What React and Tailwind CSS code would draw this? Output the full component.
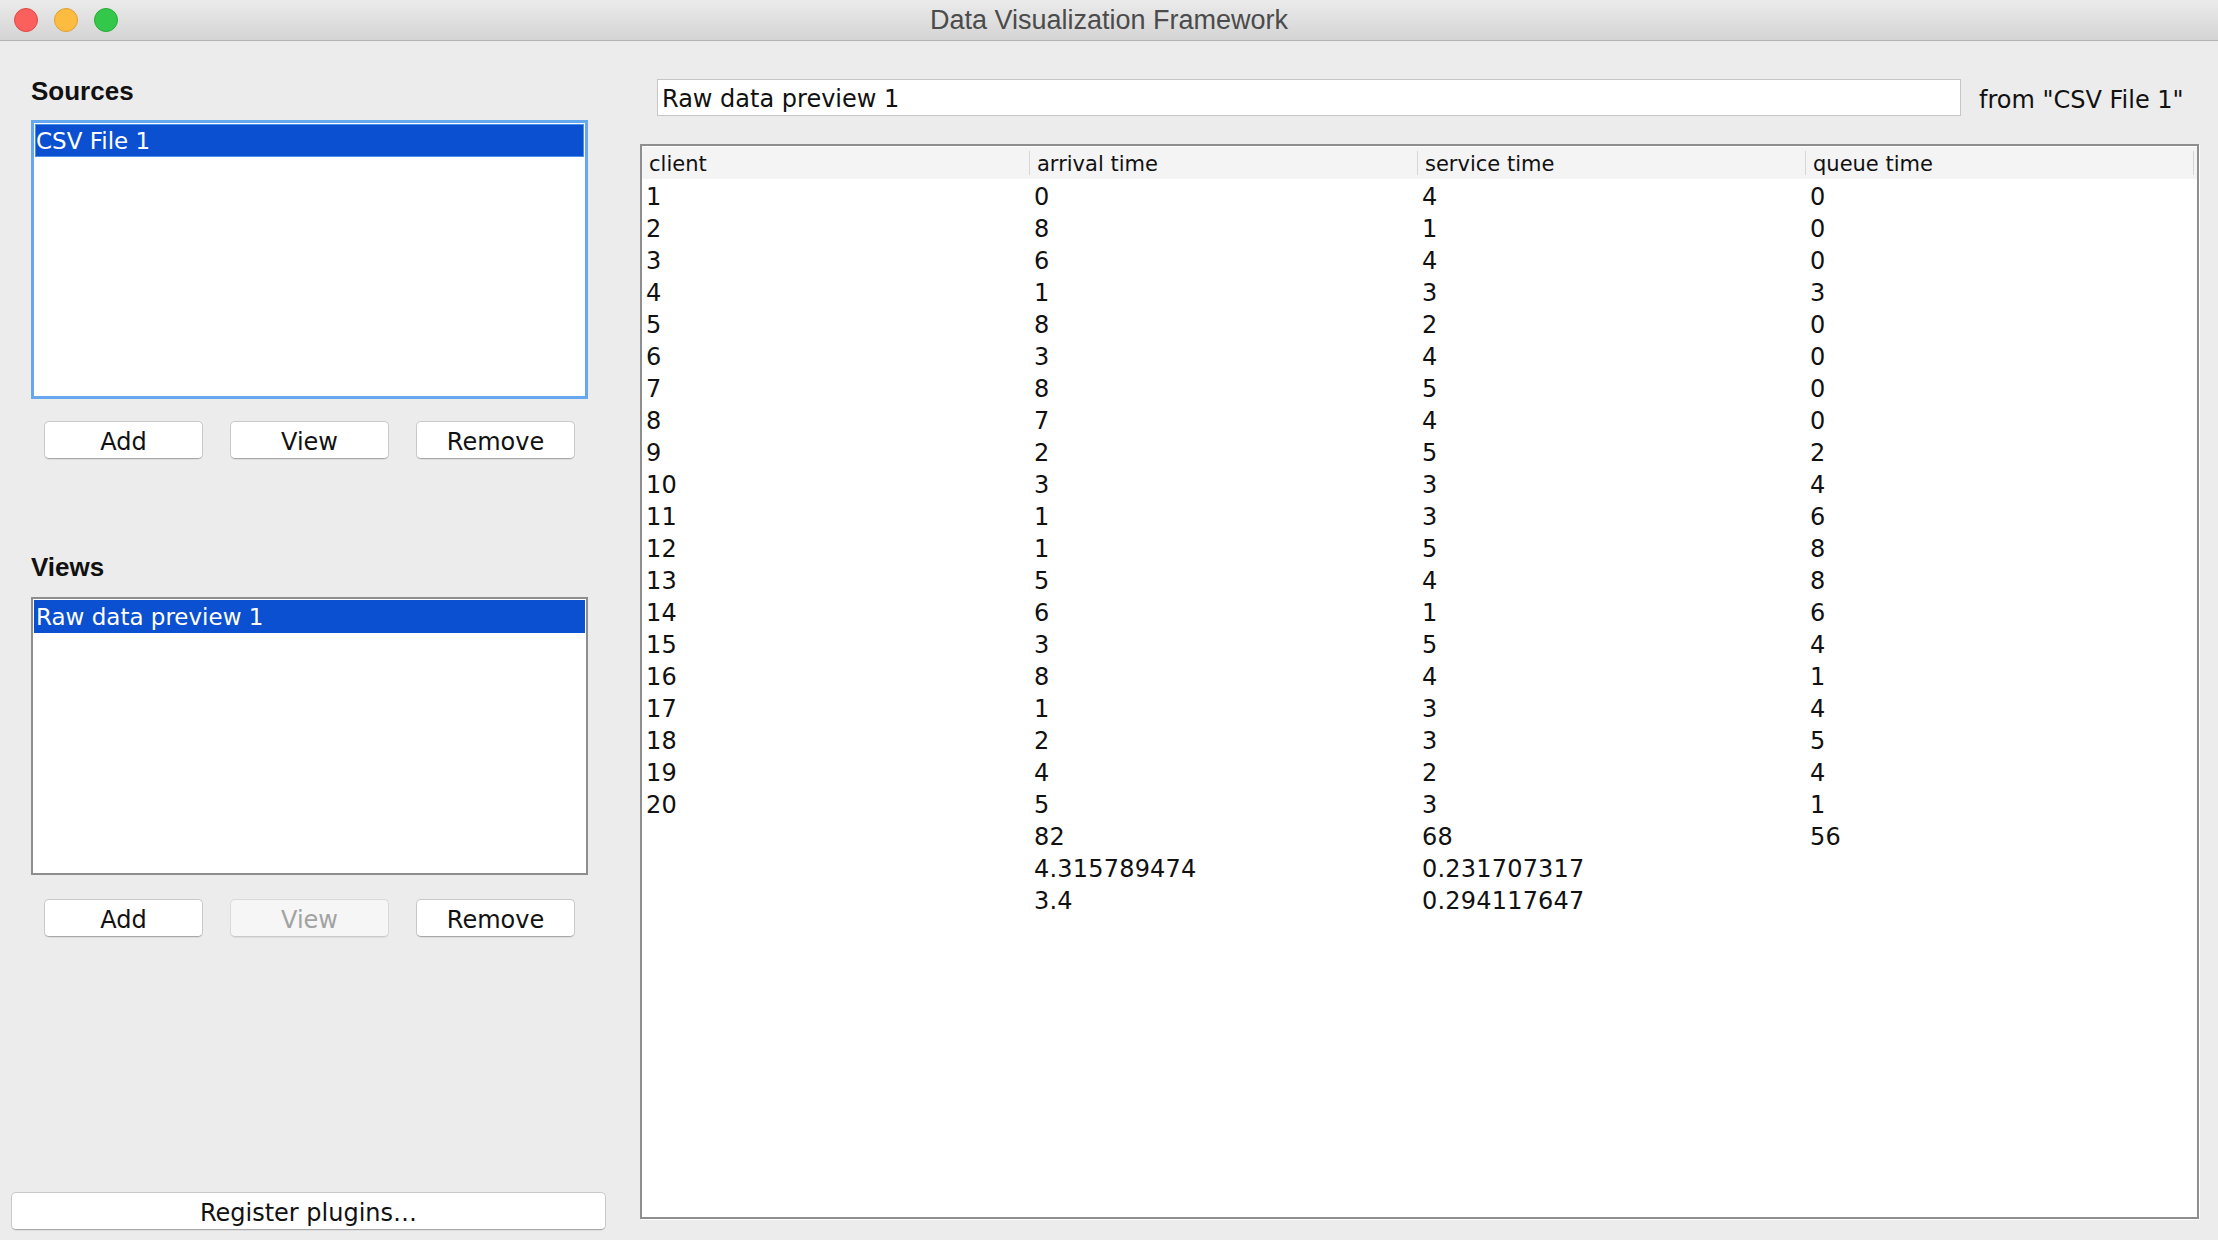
import React from 'react';

const columns = ['client', 'arrival time', 'service time', 'queue time'];

const rows = [
  ['1', '0', '4', '0'],
  ['2', '8', '1', '0'],
  ['3', '6', '4', '0'],
  ['4', '1', '3', '3'],
  ['5', '8', '2', '0'],
  ['6', '3', '4', '0'],
  ['7', '8', '5', '0'],
  ['8', '7', '4', '0'],
  ['9', '2', '5', '2'],
  ['10', '3', '3', '4'],
  ['11', '1', '3', '6'],
  ['12', '1', '5', '8'],
  ['13', '5', '4', '8'],
  ['14', '6', '1', '6'],
  ['15', '3', '5', '4'],
  ['16', '8', '4', '1'],
  ['17', '1', '3', '4'],
  ['18', '2', '3', '5'],
  ['19', '4', '2', '4'],
  ['20', '5', '3', '1'],
  ['', '82', '68', '56'],
  ['', '4.315789474', '0.231707317', ''],
  ['', '3.4', '0.294117647', ''],
];

function PushButton({ label, disabled = false, className = '' }) {
  return (
    <button
      type="button"
      disabled={disabled}
      className={`h-[38px] pt-[3px] rounded-[5px] border text-[24px] leading-[28px] shadow-[0_1px_0_rgba(0,0,0,0.06)] ${
        disabled
          ? 'bg-[#f6f6f6] text-[#a2a2a2] border-[#d9d9d9] border-b-[#c9c9c9]'
          : 'bg-white text-[#111111] border-[#c9c9c9] border-b-[#a8a8a8]'
      } ${className}`}
    >
      {label}
    </button>
  );
}

function ListBox({ item, focused }) {
  return (
    <div
      className={`bg-white p-px ${
        focused ? 'h-[279px] border-[3px] border-[#66a8ee]' : 'h-[278px] border-2 border-[#8e8e8e]'
      }`}
    >
      <div
        className={`h-[33px] bg-[#0b50d0] pt-[2px] text-[23px] text-white ${
          focused ? 'border border-[#4a8fe9] leading-[29px] pl-0' : 'leading-[31px] pl-[2px]'
        }`}
      >
        {item}
      </div>
    </div>
  );
}

function ButtonRow({ viewDisabled }) {
  return (
    <div className="flex justify-center gap-[27px]">
      <PushButton label="Add" className="w-[159px]" />
      <PushButton label="View" disabled={viewDisabled} className="w-[159px]" />
      <PushButton label="Remove" className="w-[159px]" />
    </div>
  );
}

export default function App() {
  return (
    <div className="w-[2218px] h-[1240px] overflow-hidden bg-[#ececec] font-['DejaVu_Sans',sans-serif] text-[#111111]">
      {/* Title bar */}
      <div className="relative h-[41px] flex items-center justify-center border-b border-[#b3b3b3] bg-gradient-to-b from-[#ebebeb] to-[#d4d4d4]">
        <div className="absolute left-[14px] top-[8px] flex gap-[16px]">
          <span className="w-[24px] h-[24px] rounded-full bg-[#fc605c] border border-[#df4944]"></span>
          <span className="w-[24px] h-[24px] rounded-full bg-[#fdbc40] border border-[#dea034]"></span>
          <span className="w-[24px] h-[24px] rounded-full bg-[#34c84a] border border-[#27aa35]"></span>
        </div>
        <span className="font-['Liberation_Sans',Arial,sans-serif] text-[27px] text-[#4b4b4b]">
          Data Visualization Framework
        </span>
      </div>

      <div className="flex h-[1199px]">
        {/* Left panel */}
        <div className="w-[640px] flex flex-col">
          <div className="pl-[31px] pr-[52px] pt-[35px]">
            <h2 className="font-['Liberation_Sans',Arial,sans-serif] font-bold text-[26px] leading-[30px]">Sources</h2>
            <div className="mt-[14px]">
              <ListBox item="CSV File 1" focused />
            </div>
            <div className="mt-[22px]">
              <ButtonRow viewDisabled={false} />
            </div>

            <h2 className="mt-[93px] font-['Liberation_Sans',Arial,sans-serif] font-bold text-[26px] leading-[30px]">Views</h2>
            <div className="mt-[15px]">
              <ListBox item="Raw data preview 1" />
            </div>
            <div className="mt-[24px]">
              <ButtonRow viewDisabled />
            </div>
          </div>

          <div className="mt-auto mb-[10px] ml-[11px]">
            <PushButton label="Register plugins…" className="w-[595px]" />
          </div>
        </div>

        {/* Right panel */}
        <div className="flex-1 flex flex-col pr-[19px] pb-[21px]">
          <div className="flex items-center mt-[38px] pl-[17px]">
            <div className="w-[1304px] h-[37px] bg-white border border-[#c6c6c6] pl-[4px] pt-[6px] text-[24px] leading-[26px]">
              Raw data preview 1
            </div>
            <span className="ml-[18px] text-[24px] leading-[26px] pt-[4px]">from "CSV File 1"</span>
          </div>

          <div className="mt-[28px] flex-1 bg-white border-2 border-[#8e8e8e] pt-px shadow-[1px_1px_0_#ffffff]">
            <div className="bg-[#f4f4f4]">
              <div className="grid grid-cols-4 mr-[3px] h-[32px]">
                {columns.map((c) => (
                  <div
                    key={c}
                    className="mt-[4px] h-[24px] border-r border-[#d6d6d6] pl-[7px] pt-px text-[21px] leading-[24px]"
                  >
                    {c}
                  </div>
                ))}
              </div>
            </div>
            <div className="pt-[2px]">
              {rows.map((r, i) => (
                <div key={i} className="grid grid-cols-4 mr-[3px] h-[32px] text-[24px] tracking-[0.2px] leading-[32px]">
                  {r.map((v, j) => (
                    <div key={j} className="pl-[4px]">
                      {v}
                    </div>
                  ))}
                </div>
              ))}
            </div>
          </div>
        </div>
      </div>
    </div>
  );
}
